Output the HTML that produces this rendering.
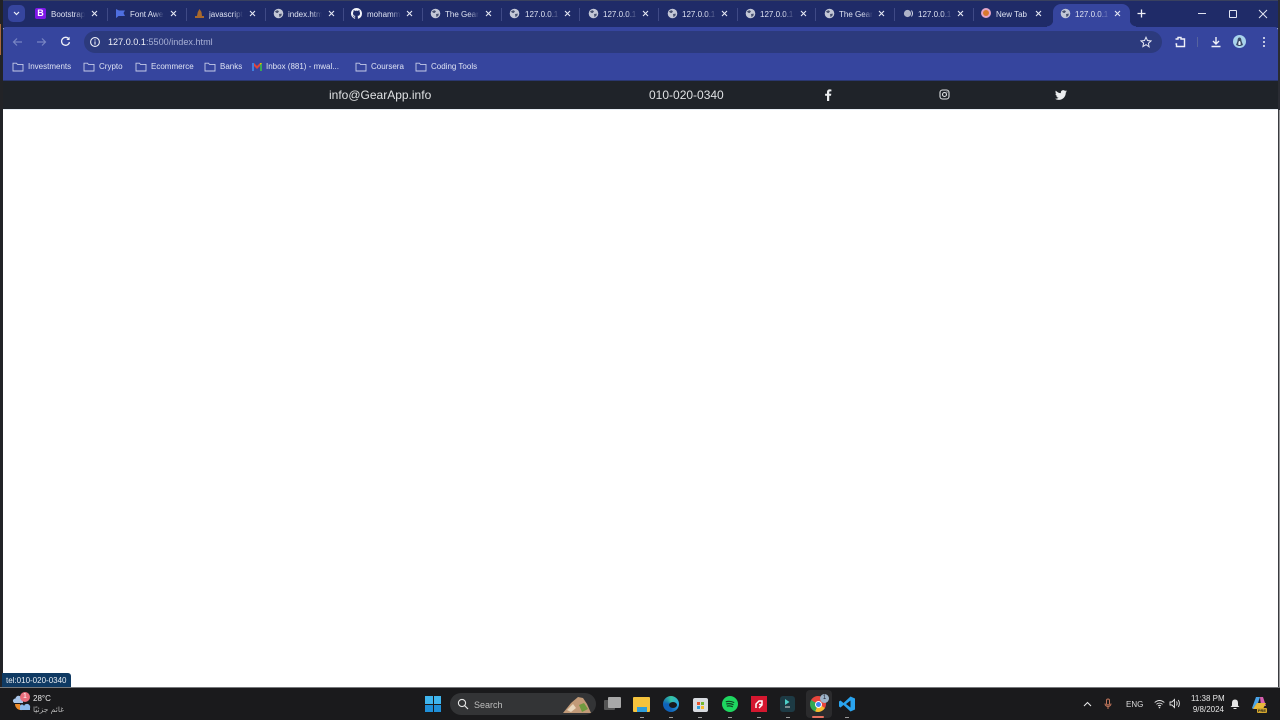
<!DOCTYPE html>
<html><head><meta charset="utf-8"><title>index</title>
<style>
html,body{margin:0;padding:0;width:1280px;height:720px;overflow:hidden;background:#fff;font-family:"Liberation Sans","Noto Sans CJK SC",sans-serif}
body{filter:blur(.35px)}
div,span,svg{position:absolute}
.t{font-size:8px;color:#dfe3f2;white-space:nowrap;top:8.5px;height:11px;line-height:11px;overflow:hidden;width:34px;-webkit-mask-image:linear-gradient(90deg,#000 70%,transparent);mask-image:linear-gradient(90deg,#000 70%,transparent)}
.x{top:9px;width:9px;height:9px}
.sep{top:8px;width:1px;height:13px;background:#3f4a86}
.g{top:8px;width:11px;height:11px}
.b{top:61px;font-size:8px;line-height:11px;color:#dfe3f3;white-space:nowrap}
.f{top:62px;width:12px;height:10px}
.d{top:717px;width:4px;height:1px;background:#9a9a9a}
</style></head><body>
<svg width="0" height="0" style="position:absolute"><defs>
<symbol id="x" viewBox="0 0 9 9"><path d="M2 2L7 7M7 2L2 7" stroke="#e6e9f4" stroke-width="1.1" fill="none"/></symbol>
<symbol id="g" viewBox="0 0 11 11"><circle cx="5.5" cy="5.5" r="4.8" fill="#c3c7d6"/><path d="M2 3.2L4.5 2.2 6 3.2 4.8 5 3 4.8ZM6 6L8.8 5.6 8.5 7.5 6.5 9.2Z" fill="#47506f"/></symbol>
<symbol id="f" viewBox="0 0 12 10"><path d="M1 1.2H4.5L5.5 2.4H11V9H1Z" fill="none" stroke="#c5cbe8" stroke-width=".9"/></symbol>
</defs></svg>

<div style="left:0;top:0;width:1280px;height:720px;background:#fff"></div>
<div style="left:3px;top:1px;width:1275px;height:27px;background:#1f2b68"></div>
<div style="left:3px;top:0;width:1275px;height:1px;background:#39415f"></div>
<div style="left:3px;top:27px;width:1275px;height:54px;background:#36459e;border-radius:3px 3px 0 0"></div>
<div style="left:0;top:0;width:3px;height:688px;background:#222327"></div>
<div style="left:0;top:24px;width:1px;height:31px;background:#a8673f"></div>
<div style="left:1278px;top:0;width:2px;height:110px;background:#2a2c33"></div>
<div style="left:1278px;top:110px;width:1px;height:578px;background:#3a3b3f"></div>
<div style="left:1279px;top:110px;width:1px;height:578px;background:#9a9a9c"></div>

<div style="left:8px;top:5px;width:17px;height:17px;border-radius:5px;background:#36459e"></div>
<svg style="left:13px;top:11px" width="7" height="5" viewBox="0 0 7 5"><path d="M1 1L3.5 3.5 6 1" fill="none" stroke="#eef0f8" stroke-width="1.2"/></svg>

<!-- Tab 1 -->
<div style="left:35px;top:8px;width:11px;height:11px;border-radius:2px;background:#7f17e8;color:#fff;font-size:9px;font-weight:bold;line-height:11px;text-align:center">B</div>
<div class="t" style="left:51px">Bootstrap</div><svg class="x" style="left:90px"><use href="#x"/></svg><div class="sep" style="left:107px"></div>
<!-- Tab 2 -->
<svg style="left:115px;top:8px" width="11" height="11" viewBox="0 0 11 11"><path d="M1 1L4 2.5H10L8.5 5 10 8H3.5L1.8 9.5 1 10Z" fill="#4f6fe0"/></svg>
<div class="t" style="left:130px">Font Awesome</div><svg class="x" style="left:169px"><use href="#x"/></svg><div class="sep" style="left:186px"></div>
<!-- Tab 3 -->
<svg style="left:194px;top:8px" width="11" height="11" viewBox="0 0 11 11"><path d="M5.5 1L7.5 4 8 8H10V10H1V8H3L3.8 4Z" fill="#a8682c"/></svg>
<div class="t" style="left:209px">javascript</div><svg class="x" style="left:248px"><use href="#x"/></svg><div class="sep" style="left:265px"></div>
<!-- Tab 4 -->
<svg class="g" style="left:273px"><use href="#g"/></svg>
<div class="t" style="left:288px">index.html</div><svg class="x" style="left:327px"><use href="#x"/></svg><div class="sep" style="left:343px"></div>
<!-- Tab 5 -->
<svg style="left:351px;top:8px" width="11" height="11" viewBox="0 0 16 16"><path fill="#f4f5fa" d="M8 0C3.58 0 0 3.58 0 8c0 3.54 2.29 6.53 5.47 7.59.4.07.55-.17.55-.38 0-.19-.01-.82-.01-1.49-2.01.37-2.53-.49-2.69-.94-.09-.23-.48-.94-.82-1.13-.28-.15-.68-.52-.01-.53.63-.01 1.08.58 1.23.82.72 1.21 1.87.87 2.33.66.07-.52.28-.87.51-1.07-1.78-.2-3.64-.89-3.64-3.95 0-.87.31-1.59.82-2.15-.08-.2-.36-1.02.08-2.12 0 0 .67-.21 2.2.82a7.4 7.4 0 014 0c1.53-1.04 2.2-.82 2.2-.82.44 1.1.16 1.92.08 2.12.51.56.82 1.27.82 2.15 0 3.07-1.87 3.75-3.65 3.95.29.25.54.73.54 1.48 0 1.07-.01 1.93-.01 2.2 0 .21.15.46.55.38A8 8 0 0016 8c0-4.42-3.58-8-8-8z"/></svg>
<div class="t" style="left:367px">mohammed</div><svg class="x" style="left:405px"><use href="#x"/></svg><div class="sep" style="left:422px"></div>
<!-- Tab 6 -->
<svg class="g" style="left:430px"><use href="#g"/></svg>
<div class="t" style="left:445px">The GearApp</div><svg class="x" style="left:484px"><use href="#x"/></svg><div class="sep" style="left:501px"></div>
<!-- Tab 7 -->
<svg class="g" style="left:509px"><use href="#g"/></svg>
<div class="t" style="left:525px">127.0.0.1:5500</div><svg class="x" style="left:563px"><use href="#x"/></svg><div class="sep" style="left:579px"></div>
<!-- Tab 8 -->
<svg class="g" style="left:588px"><use href="#g"/></svg>
<div class="t" style="left:603px">127.0.0.1:5500</div><svg class="x" style="left:641px"><use href="#x"/></svg><div class="sep" style="left:658px"></div>
<!-- Tab 9 -->
<svg class="g" style="left:667px"><use href="#g"/></svg>
<div class="t" style="left:682px">127.0.0.1:5500</div><svg class="x" style="left:720px"><use href="#x"/></svg><div class="sep" style="left:737px"></div>
<!-- Tab 10 -->
<svg class="g" style="left:745px"><use href="#g"/></svg>
<div class="t" style="left:760px">127.0.0.1:5500</div><svg class="x" style="left:799px"><use href="#x"/></svg><div class="sep" style="left:815px"></div>
<!-- Tab 11 -->
<svg class="g" style="left:824px"><use href="#g"/></svg>
<div class="t" style="left:839px">The GearApp</div><svg class="x" style="left:877px"><use href="#x"/></svg><div class="sep" style="left:894px"></div>
<!-- Tab 12 -->
<svg style="left:903px;top:8px" width="11" height="11" viewBox="0 0 11 11"><circle cx="4.5" cy="5.5" r="3.6" fill="#aeb3c8"/><path d="M8.5 2.5Q10.5 5.5 8.5 8.5" stroke="#d5d8e6" fill="none"/></svg>
<div class="t" style="left:918px">127.0.0.1:5500</div><svg class="x" style="left:956px"><use href="#x"/></svg><div class="sep" style="left:973px"></div>
<!-- Tab 13 -->
<div style="left:981px;top:8px;width:10px;height:10px;border-radius:50%;background:#e5a6c8"></div>
<div style="left:983px;top:10px;width:6px;height:6px;border-radius:50%;background:#d9792f"></div>
<div class="t" style="left:996px;-webkit-mask-image:none;mask-image:none">New Tab</div><svg class="x" style="left:1034px"><use href="#x"/></svg>
<!-- Active tab -->
<div style="left:1053px;top:4px;width:77px;height:24px;background:#36459e;border-radius:8px 8px 0 0"></div>
<div style="left:1047px;top:20px;width:6px;height:8px;background:radial-gradient(circle at 0 0,transparent 6px,#36459e 6.5px)"></div>
<div style="left:1130px;top:20px;width:6px;height:8px;background:radial-gradient(circle at 100% 0,transparent 6px,#36459e 6.5px)"></div>
<svg class="g" style="left:1060px"><use href="#g"/></svg>
<div class="t" style="left:1075px">127.0.0.1:5500</div><svg class="x" style="left:1113px"><use href="#x"/></svg>
<svg style="left:1136px;top:8px" width="11" height="11" viewBox="0 0 11 11"><path d="M5.5 1.5V9.5M1.5 5.5H9.5" stroke="#f0f1f8" stroke-width="1.3"/></svg>
<!-- window controls -->
<div style="left:1198px;top:13px;width:8px;height:1px;background:#dfe2ef"></div>
<div style="left:1229px;top:10px;width:6px;height:6px;border:1px solid #e3e6f2;border-radius:1px"></div>
<svg style="left:1258px;top:9px" width="10" height="10" viewBox="0 0 10 10"><path d="M1 1L9 9M9 1L1 9" stroke="#e3e6f2" stroke-width="1"/></svg>

<!-- Toolbar -->
<svg style="left:12px;top:37px" width="11" height="10" viewBox="0 0 11 10"><path d="M10 5H1.5M5 1.5L1.5 5 5 8.5" fill="none" stroke="#7885c3" stroke-width="1.2"/></svg>
<svg style="left:36px;top:37px" width="11" height="10" viewBox="0 0 11 10"><path d="M1 5H9.5M6 1.5L9.5 5 6 8.5" fill="none" stroke="#7885c3" stroke-width="1.2"/></svg>
<svg style="left:60px;top:36px" width="11" height="11" viewBox="0 0 11 11"><path d="M9 3.2A4 4 0 1 0 9.5 6.2" fill="none" stroke="#f0f1f8" stroke-width="1.3"/><path d="M9.6 0.8V4H6.4Z" fill="#f0f1f8"/></svg>
<div style="left:84px;top:31px;width:1078px;height:22px;border-radius:11px;background:#2c3a7d"></div>
<svg style="left:89px;top:36px" width="12" height="12" viewBox="0 0 12 12"><circle cx="6" cy="6" r="4.4" fill="none" stroke="#eef0f8" stroke-width="1.1"/><path d="M6 5.4V8.6M6 3.4V4.5" stroke="#eef0f8" stroke-width="1.1"/></svg>
<div style="left:108px;top:37px;font-size:9.1px;line-height:11px;color:#f0f1f8;white-space:nowrap">127.0.0.1<span style="position:static;color:#a9b1d6">:5500/index.html</span></div>
<svg style="left:1140px;top:36px" width="12" height="12" viewBox="0 0 24 24"><path d="M12 2.5l3 6.6 7 .8-5.2 4.8 1.4 7L12 17.3l-6.2 3.9 1.4-7L2 9.9l7-.8z" fill="none" stroke="#e3e6f3" stroke-width="2"/></svg>
<svg style="left:1174px;top:36px" width="12" height="12" viewBox="0 0 12 12"><path d="M1.5 3H4V1.5H7V3H10.5V10.5H2.5V8H1.5" fill="none" stroke="#f0f1f8" stroke-width="1.4"/></svg>
<div style="left:1197px;top:37px;width:1px;height:10px;background:#56639f"></div>
<svg style="left:1210px;top:36px" width="12" height="12" viewBox="0 0 12 12"><path d="M6 1V8M3 5L6 8 9 5M1.5 10.5H10.5" fill="none" stroke="#f0f1f8" stroke-width="1.4"/></svg>
<div style="left:1233px;top:35px;width:13px;height:13px;border-radius:50%;background:#a8d3ec"></div>
<svg style="left:1235px;top:37px" width="9" height="10" viewBox="0 0 9 10"><path d="M4.5 0.5C6 0.5 6.3 2 6.5 4L8 8 5.5 9H3.5L1 8 2.5 4C2.7 2 3 0.5 4.5 0.5Z" fill="#3c4a66"/><path d="M4.5 4C5.5 4 5.8 6 5.5 8H3.5C3.2 6 3.5 4 4.5 4Z" fill="#e8f2f8"/></svg>
<div style="left:1263px;top:37px;width:2px;height:2px;background:#f0f1f8;border-radius:50%;box-shadow:0 4px 0 #f0f1f8,0 8px 0 #f0f1f8"></div>

<!-- Bookmarks -->
<svg class="f" style="left:12px"><use href="#f"/></svg><div class="b" style="left:28px">Investments</div>
<svg class="f" style="left:83px"><use href="#f"/></svg><div class="b" style="left:99px">Crypto</div>
<svg class="f" style="left:135px"><use href="#f"/></svg><div class="b" style="left:151px">Ecommerce</div>
<svg class="f" style="left:204px"><use href="#f"/></svg><div class="b" style="left:220px">Banks</div>
<svg style="left:252px;top:63px" width="10" height="8" viewBox="0 0 10 8"><path d="M0 0H2V8H0Z" fill="#3f7fe0"/><path d="M8 0H10V8H8Z" fill="#3aa757"/><path d="M2 0L5 3 8 0V3L5 6 2 3Z" fill="#e0443a"/><path d="M8 0H10L8 2Z" fill="#f4b400"/></svg>
<div class="b" style="left:266px">Inbox (881) - mwal...</div>
<svg class="f" style="left:355px"><use href="#f"/></svg><div class="b" style="left:371px">Coursera</div>
<svg class="f" style="left:415px"><use href="#f"/></svg><div class="b" style="left:431px">Coding Tools</div>

<!-- Page -->
<div style="left:3px;top:80px;width:1275px;height:1px;background:#2a3770"></div>
<div style="left:3px;top:81px;width:1275px;height:28px;background:#1f2329"></div>
<div style="left:3px;top:109px;width:1275px;height:1px;background:#e8eef4"></div>
<div style="left:329px;top:87.5px;font-size:12px;line-height:15px;color:#dfe1e3;white-space:nowrap">info@GearApp.info</div>
<div style="left:649px;top:87.5px;font-size:12px;line-height:15px;color:#dfe1e3;white-space:nowrap">010-020-0340</div>
<svg style="left:824px;top:89px" width="8" height="12" viewBox="0 0 8 12"><path d="M5.2 12V6.8H7L7.3 4.7H5.2V3.4C5.2 2.8 5.4 2.4 6.2 2.4H7.4V.6C7.1.5 6.5.4 5.7.4 4.1.4 3 1.4 3 3.1V4.7H1.1V6.8H3V12Z" fill="#eceef0"/></svg>
<svg style="left:939px;top:89px" width="11" height="11" viewBox="0 0 11 11"><rect x="1" y="1" width="9" height="9" rx="2.5" fill="none" stroke="#dfe1e3" stroke-width="1.1"/><circle cx="5.5" cy="5.5" r="2" fill="none" stroke="#dfe1e3" stroke-width="1.1"/><circle cx="8" cy="3" r=".6" fill="#dfe1e3"/></svg>
<svg style="left:1055px;top:89px" width="12" height="12" viewBox="0 0 24 24"><path fill="#eceef0" d="M23.95 4.57a10 10 0 01-2.82.77 4.96 4.96 0 002.16-2.72 9.9 9.9 0 01-3.12 1.18 4.92 4.92 0 00-8.38 4.48A14 14 0 011.64 3.16a4.82 4.82 0 00-.67 2.48c0 1.71.87 3.21 2.19 4.1a4.9 4.9 0 01-2.23-.62v.06a4.92 4.92 0 003.95 4.83 5 5 0 01-2.21.08 4.94 4.94 0 004.6 3.42A9.87 9.87 0 010 19.54a13.94 13.94 0 007.55 2.21c9.05 0 14-7.5 14-13.98 0-.21 0-.42-.02-.63a9.94 9.94 0 002.46-2.55z"/></svg>

<!-- Status bubble -->
<div style="left:2px;top:673px;width:69px;height:15px;background:#0f3a63;border-radius:0 3px 0 0"></div>
<div style="left:6px;top:675px;font-size:8px;line-height:11px;color:#e8edf3;white-space:nowrap">tel:010-020-0340</div>

<!-- Taskbar -->
<div style="left:0;top:687px;width:1280px;height:1px;background:#77797c"></div>
<div style="left:0;top:688px;width:1280px;height:32px;background:#1a1a1c"></div>
<!-- weather -->
<svg style="left:12px;top:693px" width="20" height="20" viewBox="0 0 20 20"><path d="M1 8.5A2.4 2.4 0 0 1 3.5 5.5 3 3 0 0 1 9.5 6H11V10H2Z" fill="#a9c6ea"/><path d="M3 11A6 6 0 0 0 10 17L8 11Z" fill="#e98a2c"/><path d="M8 14A2 2 0 0 1 12 13 2.4 2.4 0 0 1 18 15V17H8Z" fill="#8db9ea"/></svg>
<div style="left:20px;top:692px;width:10px;height:10px;border-radius:50%;background:#ec6d7b;color:#fff;font-size:7px;line-height:10px;text-align:center">1</div>
<div style="left:33px;top:693px;font-size:8px;line-height:11px;color:#eaeaea">28°C</div>
<div style="left:33px;top:704px;font-size:7.5px;line-height:11px;color:#b7b7b7;white-space:nowrap;font-family:'DejaVu Sans',sans-serif" dir="rtl">غائم جزئيًا</div>
<!-- start -->
<div style="left:425px;top:696px;width:7.5px;height:7.5px;background:#3fb5ee"></div>
<div style="left:433.5px;top:696px;width:7.5px;height:7.5px;background:#3fb5ee"></div>
<div style="left:425px;top:704.5px;width:7.5px;height:7.5px;background:#1f8fd8"></div>
<div style="left:433.5px;top:704.5px;width:7.5px;height:7.5px;background:#1f8fd8"></div>
<!-- search -->
<div style="left:450px;top:693px;width:146px;height:22px;border-radius:11px;background:#333436"></div>
<svg style="left:457px;top:698px" width="12" height="12" viewBox="0 0 12 12"><circle cx="5" cy="5" r="3.6" fill="none" stroke="#e6e6e6" stroke-width="1.1"/><path d="M7.6 7.6L11 11" stroke="#e6e6e6" stroke-width="1.2"/></svg>
<div style="left:474px;top:698.5px;font-size:9px;line-height:12px;color:#bdbdbd">Search</div>
<svg style="left:562px;top:695px" width="30" height="19" viewBox="0 0 30 19"><path d="M1 18L9 8 16 2 21 3 25 9 29 18Z" fill="#c29a78"/><path d="M17 10L22 8 26 14 20 17Z" fill="#6f9a3f"/><path d="M5 15L11 9 14 13 9 17Z" fill="#e8d5bb"/></svg>
<!-- task view -->
<div style="left:604px;top:700px;width:11px;height:10px;background:#555;border-radius:1px"></div>
<div style="left:608px;top:697px;width:13px;height:11px;background:#a8a8a8;border-radius:1px"></div>
<!-- explorer -->
<div style="left:633px;top:697px;width:17px;height:15px;background:#f5c33d;border-radius:1px"></div>
<div style="left:637px;top:707px;width:10px;height:5px;background:#2f9fdc"></div>
<div class="d" style="left:640px"></div>
<!-- edge -->
<div style="left:663px;top:696px;width:16px;height:16px;border-radius:50%;background:conic-gradient(#36c5a0,#2aa8e0,#0f62b8,#0f62b8,#36c5a0)"></div>
<div style="left:669px;top:702px;width:8px;height:6px;border-radius:50%;background:#1a1a1c"></div>
<div class="d" style="left:669px"></div>
<!-- store -->
<div style="left:693px;top:698px;width:15px;height:14px;background:#d8dbe0;border-radius:2px"></div>
<div style="left:697px;top:702px;width:3px;height:3px;background:#e8552d;box-shadow:4px 0 0 #74b72e,0 4px 0 #2f9fdc,4px 4px 0 #f5b92d"></div>
<div class="d" style="left:698px"></div>
<!-- spotify -->
<div style="left:722px;top:696px;width:16px;height:16px;border-radius:50%;background:#1ed760"></div>
<svg style="left:722px;top:696px" width="16" height="16" viewBox="0 0 16 16"><path d="M3.8 5.8Q8 4.5 12.2 6.6M4.3 8Q8 7 11.5 8.8M4.8 10.2Q8 9.4 10.8 10.8" stroke="#142" fill="none" stroke-width="1.2"/></svg>
<div class="d" style="left:728px"></div>
<!-- AMD -->
<div style="left:751px;top:696px;width:16px;height:16px;background:#d5172f"></div>
<svg style="left:751px;top:696px" width="16" height="16" viewBox="0 0 16 16"><path d="M5 12V8L8 5H11V9L8 12M8 8.5H11" fill="none" stroke="#fff" stroke-width="1.5"/></svg>
<div class="d" style="left:757px"></div>
<!-- app -->
<div style="left:780px;top:696px;width:15px;height:16px;background:#1d3a44;border-radius:3px"></div>
<svg style="left:783px;top:698px" width="9" height="11" viewBox="0 0 9 11"><path d="M2 1L6.5 4 2 7Z" fill="#4dd0c8"/><path d="M2 9H7" stroke="#ddd"/></svg>
<div class="d" style="left:786px"></div>
<!-- chrome -->
<div style="left:806px;top:690px;width:26px;height:28px;background:#2b2b2d;border-radius:4px"></div>
<div style="left:810px;top:696px;width:16px;height:16px;border-radius:50%;background:conic-gradient(#e8453c 0 120deg,#f9bb2d 120deg 200deg,#34a853 200deg 300deg,#e8453c 300deg)"></div>
<div style="left:814.5px;top:700.5px;width:7px;height:7px;border-radius:50%;background:#4285f4;border:0.5px solid #fff;box-sizing:border-box"></div>
<div style="left:820px;top:694px;width:9px;height:9px;border-radius:50%;background:#9db4c9;color:#223;font-size:6px;line-height:9px;text-align:center">1</div>
<div style="left:812px;top:716px;width:12px;height:2px;background:#e8705f;border-radius:1px"></div>
<!-- vscode -->
<svg style="left:839px;top:696px" width="16" height="16" viewBox="0 0 16 16"><path d="M11.5 0.5L16 2.5V13.5L11.5 15.5 4.5 9 1.5 11.5 0 10.5V5.5L1.5 4.5 4.5 7ZM11.5 4.5L7 8 11.5 11.5Z" fill="#2aa4ef"/></svg>
<div class="d" style="left:845px"></div>
<!-- tray -->
<svg style="left:1083px;top:701px" width="9" height="6" viewBox="0 0 9 6"><path d="M1 5L4.5 1.5 8 5" fill="none" stroke="#e6e6e6" stroke-width="1.1"/></svg>
<svg style="left:1104px;top:698px" width="8" height="12" viewBox="0 0 8 12"><rect x="2.5" y="1" width="3" height="6" rx="1.5" fill="none" stroke="#c4775c"/><path d="M1 5.5A3 3 0 0 0 7 5.5M4 8.5V11" fill="none" stroke="#c4775c"/></svg>
<div style="left:1126px;top:699px;font-size:8px;line-height:11px;color:#dcdcdc">ENG</div>
<svg style="left:1154px;top:699px" width="11" height="10" viewBox="0 0 11 10"><path d="M0.7 3.5Q5.5-.5 10.3 3.5M2.4 5.3Q5.5 2.8 8.6 5.3M4 7Q5.5 5.8 7 7" fill="none" stroke="#e6e6e6" stroke-width=".9"/><circle cx="5.5" cy="8.5" r=".8" fill="#e6e6e6"/></svg>
<svg style="left:1169px;top:698px" width="12" height="11" viewBox="0 0 12 11"><path d="M1 4H3L5.5 1.5V9.5L3 7H1Z" fill="none" stroke="#e6e6e6" stroke-width=".9"/><path d="M7.5 3.5Q8.8 5.5 7.5 7.5M9.3 2Q11.5 5.5 9.3 9" fill="none" stroke="#e6e6e6" stroke-width=".9"/></svg>
<div style="left:1191px;top:693px;font-size:8px;line-height:11px;color:#e6e6e6;white-space:nowrap;text-align:right;width:33px">11:38 PM<br>9/8/2024</div>
<svg style="left:1229px;top:698px" width="12" height="12" viewBox="0 0 11 12"><path d="M5.5 1.5Q8.5 1.5 8.5 5V7.5L10 9H1L2.5 7.5V5Q2.5 1.5 5.5 1.5Z" fill="#e6e6e6"/><path d="M4 10.5H7" stroke="#e6e6e6"/></svg>
<svg style="left:1251px;top:695px" width="16" height="16" viewBox="0 0 16 16"><path d="M1 13L5 2H9L7 8 2 14Z" fill="#4aa3e8"/><path d="M9 2H12L15 11H10Z" fill="#d65fb0"/><path d="M2 14L6 8H15L12 14Z" fill="#e8b83a"/></svg>
<div style="left:1257px;top:708px;width:10px;height:5px;background:#d4a72c;border-radius:1px;font-size:4px;line-height:5px;color:#222;text-align:center;font-weight:bold">PRE</div>
</body></html>
